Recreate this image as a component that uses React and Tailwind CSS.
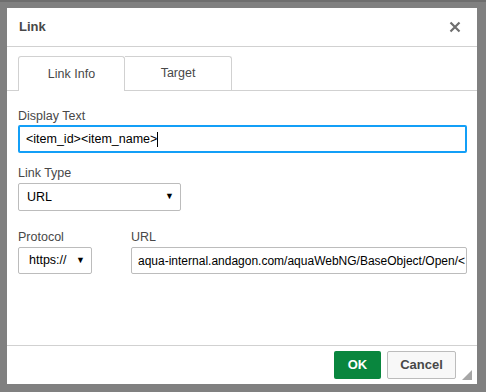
export default function App() {
  return (
    <div className="w-[486px] h-[392px] bg-[#808080] border-t-2 border-[#6e6e6e] pl-[7px] pt-[6px] font-['Liberation_Sans',Arial,sans-serif] text-[12.5px] text-[#484848]">
      <div className="relative w-[470px] h-[376px] bg-white flex flex-col">
        {/* header */}
        <div className="h-[39px] shrink-0 border-b border-[#d1d1d1] flex items-center justify-between pl-[12px] pr-[14px]">
          <span className="font-bold text-[13px]">Link</span>
          <svg width="12" height="12" viewBox="0 0 12 12" className="mr-[2px]">
            <path d="M1.5 1.5 L10.5 10.5 M10.5 1.5 L1.5 10.5" stroke="#6f6f6f" strokeWidth="2.2" />
          </svg>
        </div>

        {/* tabs */}
        <div className="mt-[9px] flex items-end h-[35px] border-b border-[#d1d1d1]">
          <div className="w-[11px]" />
          <div className="w-[107px] h-[35px] -mb-px bg-white border border-b-0 border-[#d1d1d1] rounded-t-[3px] flex items-center justify-center">
            Link Info
          </div>
          <div className="w-[107px] h-[34px] border border-l-0 border-b-0 border-[#d1d1d1] rounded-tr-[3px] flex items-center justify-center">
            Target
          </div>
        </div>

        {/* body */}
        <div className="flex-1 px-[11px] pt-[18px]">
          <div className="leading-[15px]">Display Text</div>
          <div className="mt-[1px] w-[449px] h-[28px] border-2 border-[#139ff7] rounded-[2px] flex items-center pl-[6px] text-black">
            <span>&lt;item_id&gt;&lt;item_name&gt;</span>
            <span className="w-px h-[15px] bg-black" />
          </div>

          <div className="mt-[13px] leading-[15px]">Link Type</div>
          <div className="mt-[2px] w-[163px] h-[28px] border border-[#bcbcbc] rounded-[2px] flex items-center justify-between pl-[8px] pr-[6px] text-black">
            <span>URL</span>
            <span className="text-[9px]">▼</span>
          </div>

          <div className="mt-[19px] flex gap-[39px]">
            <div>
              <div className="leading-[15px]">Protocol</div>
              <div className="mt-[2px] w-[74px] h-[27px] border border-[#bcbcbc] rounded-[2px] flex items-center justify-between pl-[10px] pr-[6px] text-black">
                <span>https://</span>
                <span className="text-[9px]">▼</span>
              </div>
            </div>
            <div>
              <div className="leading-[15px]">URL</div>
              <div className="mt-[2px] w-[336px] h-[27px] border border-[#bcbcbc] rounded-[2px] flex items-center pl-[6px] overflow-hidden whitespace-nowrap text-black text-[12px]">
                aqua-internal.andagon.com/aquaWebNG/BaseObject/Open/&lt;
              </div>
            </div>
          </div>
        </div>

        {/* footer */}
        <div className="h-[39px] shrink-0 border-t border-[#d1d1d1] flex items-start justify-end pt-[5px] pr-[21px] gap-[6px]">
          <button className="w-[47px] h-[28px] bg-[#09863e] rounded-[2px] text-white font-bold text-[13px]">OK</button>
          <button className="w-[69px] h-[28px] bg-[#f8f8f8] border border-[#bcbcbc] rounded-[2px] text-[#484848] font-bold text-[13px]">Cancel</button>
        </div>

        <svg width="10" height="10" viewBox="0 0 10 10" className="absolute right-[5px] bottom-[4px]">
          <path d="M10 0 L10 10 L0 10 Z" fill="#a6a6a6" />
        </svg>
      </div>
    </div>
  );
}
